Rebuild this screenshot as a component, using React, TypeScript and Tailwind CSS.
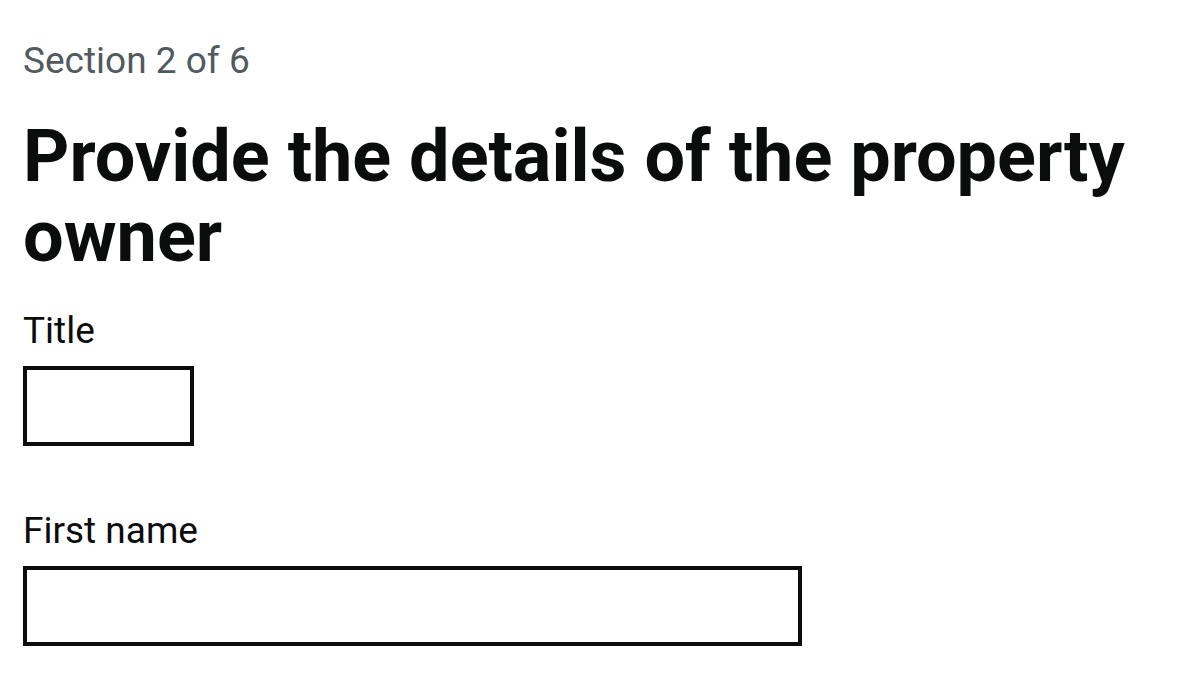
export default function App() {
  return (
    <main className="min-h-screen bg-white pl-[23px] pr-[23px] pt-[36px] font-['Roboto',sans-serif] text-[#0b0c0c]">
      <span className="mb-[31px] block text-[37px] leading-[50px] text-[#505a5f]">Section 2 of 6</span>
      <h1 className="mb-[29px] text-[72px] font-bold leading-[80px]">Provide the details of the property owner</h1>

      <div className="mb-[60px]">
        <label htmlFor="title" className="mb-[10px] block text-[37px] leading-[50px]">
          Title
        </label>
        <input
          id="title"
          name="title"
          type="text"
          className="block h-[80px] w-[171px] rounded-none border-[4px] border-[#0b0c0c] bg-white px-[10px] text-[37px] outline-none"
        />
      </div>

      <div>
        <label htmlFor="first-name" className="mb-[10px] block text-[37px] leading-[50px]">
          First name
        </label>
        <input
          id="first-name"
          name="firstName"
          type="text"
          autoComplete="given-name"
          className="block h-[80px] w-[779px] rounded-none border-[4px] border-[#0b0c0c] bg-white px-[10px] text-[37px] outline-none"
        />
      </div>
    </main>
  );
}
